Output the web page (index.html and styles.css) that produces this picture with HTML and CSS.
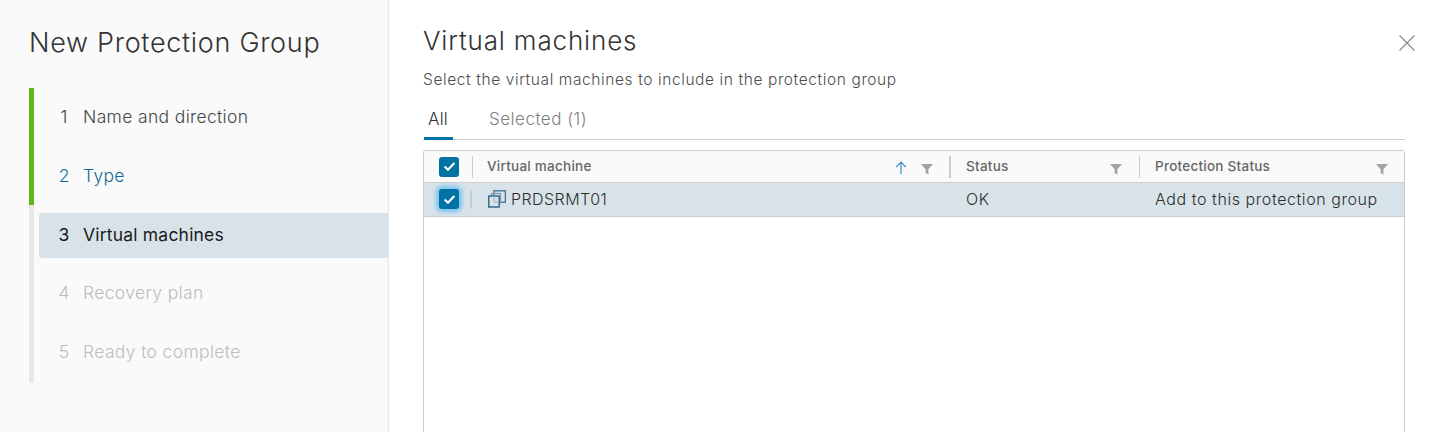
FILE: index.html
```html
<!DOCTYPE html>
<html lang="en">
<head>
<meta charset="utf-8">
<title>New Protection Group</title>
<link rel="stylesheet" href="styles.css">
</head>
<body>
<div class="wizard">
  <aside class="sidebar">
    <h1 class="wizard-title">New Protection Group</h1>
    <ol class="steps">
      <li class="step done"><span class="num">1</span><span>Name and direction</span></li>
      <li class="step done link"><span class="num">2</span><span>Type</span></li>
      <li class="step current"><span class="num">3</span><span>Virtual machines</span></li>
      <li class="step disabled"><span class="num">4</span><span>Recovery plan</span></li>
      <li class="step disabled"><span class="num">5</span><span>Ready to complete</span></li>
    </ol>
  </aside>
  <main class="content">
    <header class="head">
      <h2 class="page-title">Virtual machines</h2>
      <svg class="close" viewBox="0 0 16 16" width="16" height="16"><path d="M0.5 0.5L15.5 15.5M15.5 0.5L0.5 15.5" stroke="#8c8c8c" stroke-width="1.3" fill="none"/></svg>
    </header>
    <p class="subtitle">Select the virtual machines to include in the protection group</p>
    <nav class="tabs">
      <span class="tab active">All</span>
      <span class="tab">Selected (1)</span>
    </nav>
    <section class="grid">
      <div class="row header">
        <div class="c-check">
          <span class="check"><svg viewBox="0 0 12 10" width="13" height="11"><path d="M1.5 5L4.6 8L10.5 1.8" stroke="#fff" stroke-width="2" fill="none"/></svg></span>
          <i class="sep tall"></i>
        </div>
        <div class="c-vm">
          <span class="hlabel">Virtual machine</span>
          <svg class="arrow" viewBox="0 0 12 14" width="12" height="14"><path d="M6 13V1.2M1.2 6L6 1.2L10.8 6" stroke="#3f8fc4" stroke-width="1.2" fill="none"/></svg>
          <svg class="filter" viewBox="0 0 12 12" width="12" height="12"><path d="M0 1H12L7.4 6.3V11.5L4.6 10V6.3Z" fill="#a3a3a3"/></svg>
          <i class="sep strong"></i>
        </div>
        <div class="c-status">
          <span class="hlabel">Status</span>
          <svg class="filter" viewBox="0 0 12 12" width="12" height="12"><path d="M0 1H12L7.4 6.3V11.5L4.6 10V6.3Z" fill="#a3a3a3"/></svg>
          <i class="sep tall"></i>
        </div>
        <div class="c-prot">
          <span class="hlabel">Protection Status</span>
          <svg class="filter" viewBox="0 0 12 12" width="12" height="12"><path d="M0 1H12L7.4 6.3V11.5L4.6 10V6.3Z" fill="#a3a3a3"/></svg>
        </div>
      </div>
      <div class="row selected">
        <div class="c-check">
          <span class="check focus"><svg viewBox="0 0 12 10" width="13" height="11"><path d="M1.5 5L4.6 8L10.5 1.8" stroke="#fff" stroke-width="2" fill="none"/></svg></span>
          <i class="sep short"></i>
        </div>
        <div class="c-vm vm-name">
          <svg class="vm-icon" viewBox="0 0 18 18" width="18" height="18">
            <rect x="6" y="0.8" width="11.4" height="11.4" fill="none" stroke="#3f7291" stroke-width="1.3"/>
            <rect x="3.5" y="3.5" width="9" height="9.5" fill="none" stroke="#7d9db2" stroke-width="1.2"/>
            <rect x="0.8" y="6" width="10.4" height="11" fill="#d8e3e9" stroke="#3f7291" stroke-width="1.6"/>
            <path d="M6 6V12.2H11" fill="none" stroke="#9db4c3" stroke-width="1"/>
          </svg>
          <span class="vm-label">PRDSRMT01</span>
        </div>
        <div class="c-status">OK</div>
        <div class="c-prot">Add to this protection group</div>
      </div>
    </section>
  </main>
</div>
</body>
</html>
```
FILE: styles.css
```css
* { box-sizing: border-box; }
html, body { margin: 0; height: 432px; overflow: hidden; background: #fff; }
body { font-family: "Inter", "Liberation Sans", sans-serif; color: #454545; }

.wizard { display: flex; height: 432px; }

.sidebar {
  width: 389px;
  flex: none;
  background: #fafafa;
  border-right: 1px solid #e8e8e8;
  padding: 25px 0 0 29px;
}
.wizard-title {
  margin: 0;
  font-size: 27px;
  line-height: 36px;
  font-weight: 300;
  letter-spacing: 0.7px;
  color: #333;
  white-space: nowrap;
}
.steps {
  list-style: none;
  margin: 27px 0 0;
  padding: 0;
  height: 295px;
  width: 359px;
  display: flex;
  flex-direction: column;
  background: linear-gradient(#5eb715 0 117px, #e8e8e8 117px) left top / 5px 100% no-repeat;
}
.step {
  height: 45px;
  margin: 7px 0 6.7px 10px;
  padding: 0 0 2px 19px;
  display: flex;
  align-items: center;
  font-size: 17.5px;
  font-weight: 300;
  letter-spacing: 0.35px;
  white-space: nowrap;
  border-radius: 3px 0 0 3px;
  color: #474747;
}
.num { width: 12px; margin-right: 13px; text-align: center; flex: none; letter-spacing: 0; }
.step.link { color: #0f6a94; }
.step.current { background: #d8e3e9; color: #1a1a1a; font-weight: 400; letter-spacing: 0.2px; margin: 8px 0 5.7px 10px; }
.step.disabled { color: #bcbcbc; }

.content { flex: 1; padding: 23px 34px 0 34px; min-width: 0; }
.head { display: flex; justify-content: space-between; align-items: flex-start; height: 38px; }
.page-title {
  margin: 0;
  font-size: 26px;
  line-height: 36px;
  font-weight: 300;
  letter-spacing: 0.85px;
  color: #333;
  white-space: nowrap;
}
.close { margin: 12px -10px 0 0; }
.subtitle {
  margin: 9px 0 0;
  font-size: 15.5px;
  line-height: 20px;
  font-weight: 300;
  letter-spacing: 0.6px;
  color: #4d4d4d;
  white-space: nowrap;
}
.tabs {
  margin: 16px 0 0;
  width: 982px;
  height: 34px;
  border-bottom: 1px solid #ccc;
  display: flex;
  gap: 36px;
  padding-left: 1px;
}
.tab {
  font-size: 17px;
  line-height: 24px;
  font-weight: 300;
  letter-spacing: 0.5px;
  color: #808080;
  height: 34px;
  padding-top: 1px;
  white-space: nowrap;
}
.tab.active {
  color: #333;
  border-bottom: 3px solid #0072a3;
  padding: 1px 5px 0 4px;
  letter-spacing: 0.2px;
}

.grid {
  margin-top: 10px;
  width: 982px;
  height: 300px;
  border: 1px solid #ccc;
  border-bottom: none;
  border-radius: 3px 3px 0 0;
}
.row { display: flex; position: relative; }
.row > div { display: flex; align-items: center; position: relative; }
.header { height: 32px; background: #fafafa; border-bottom: 1px solid #ccc; }
.selected { height: 34px; background: #d8e3e9; border-bottom: 1px solid #ccc; font-size: 16px; font-weight: 300; letter-spacing: 0.57px; color: #2e2e2e; }

.c-check { width: 49px; padding-left: 15px; flex: none; }
.c-vm { width: 478px; padding-left: 14px; flex: none; }
.c-status { width: 189px; padding-left: 15px; flex: none; }
.c-prot { flex: 1; padding-left: 15px; white-space: nowrap; }
.selected > div { padding-bottom: 2px; }
.selected > .c-check { padding-bottom: 1px; }

.hlabel { font-size: 13.5px; font-weight: 500; letter-spacing: 0.25px; color: #666; white-space: nowrap; padding-bottom: 2px; }

.check {
  width: 20px;
  height: 20px;
  border-radius: 3px;
  background: #0072a3;
  display: flex;
  align-items: center;
  justify-content: center;
}
.check.focus { box-shadow: 0 0 4px 3px #7cc4ee; }

.sep { position: absolute; top: 5px; right: 0; width: 1px; height: 22px; background: #ccc; }
.sep.strong { width: 2px; background: #ccc; right: 0; }
.sep.short { top: 8px; right: 1px; height: 17px; width: 2px; background: #c2cbd0; }

.arrow { position: absolute; right: 44px; top: 10px; }
.filter { position: absolute; right: 18px; top: 12px; }
.c-prot .filter { right: 16px; }
.vm-name { gap: 5px; padding-left: 15px; }
.vm-label { letter-spacing: 0.45px; }
.vm-icon { flex: none; }
```
